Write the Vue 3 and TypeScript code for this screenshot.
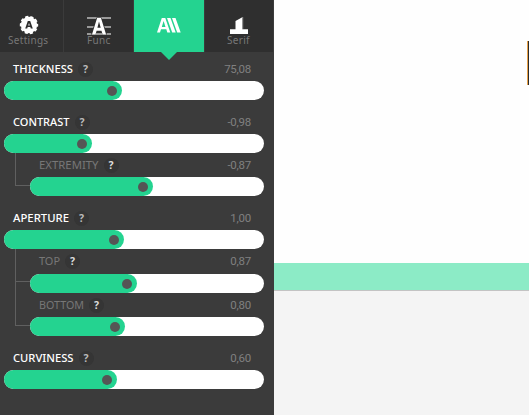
<script setup lang="ts">
interface Control {
  label: string
  value: string
  fill: number
  labelWidth: number
}
interface Group extends Control {
  children: Control[]
}

const groups: Group[] = [
  { label: 'THICKNESS', value: '75,08', fill: 118, labelWidth: 60, children: [] },
  {
    label: 'CONTRAST', value: '-0,98', fill: 88, labelWidth: 56.5,
    children: [{ label: 'EXTREMITY', value: '-0,87', fill: 123, labelWidth: 59.5 }],
  },
  {
    label: 'APERTURE', value: '1,00', fill: 120, labelWidth: 56,
    children: [
      { label: 'TOP', value: '0,87', fill: 107, labelWidth: 21 },
      { label: 'BOTTOM', value: '0,80', fill: 95, labelWidth: 45 },
    ],
  },
  { label: 'CURVINESS', value: '0,60', fill: 113, labelWidth: 60.5, children: [] },
]
</script>

<template>
  <div class="app">
    <aside class="sidebar">
      <nav class="tabs">
        <div class="tab settings">
          <svg class="icon" width="20" height="20" viewBox="0 0 20 20">
            <circle cx="10" cy="10" r="8.2" fill="#fff" />
            <circle cx="10" cy="10" r="8.3" fill="none" stroke="#fff" stroke-width="1.8" stroke-dasharray="3.2 2.01" stroke-dashoffset="1.5" />
            <path d="M6.2 13.500 8.800 6h2.400l2.600 7.500h-2l-.5-1.600H8.700l-.5 1.600zM9.200 10.600h1.600L10 8z" fill="#2f2f2f" fill-rule="evenodd" />
          </svg>
          <span>Settings</span>
        </div>
        <div class="tab func">
          <svg class="icon" width="24" height="20" viewBox="0 0 24 20">
            <path d="M0 2h24M0 11h24M0 18h24" stroke="#999" stroke-width="2" />
            <path d="M4 18.600 9.500 1.400h5L20 18.600h-4.600L14.200 15H9.800l-1.200 3.600z" fill="#2f2f2f" />
            <path d="M5 18.500 10.100 2h3.900l5.100 16.500h-3.500l-1.100-3.800H9.600l-1.100 3.800zM10.400 11.800h3.300L12 5.600z" fill="#fff" fill-rule="evenodd" />
          </svg>
          <span>Func</span>
        </div>
        <div class="tab active">
          <svg class="icon" width="24" height="16" viewBox="0 0 24 16">
            <path d="M0 15.500 4.800 1h3.500l5 14.500h-3l-1-3.200H4L3 15.500zM4.800 9.900h3.700L6.600 4z" fill="#fff" fill-rule="evenodd" />
            <path d="M10 1h3.500l5.200 14.500h-3.500zM15 1h3.500l5.200 14.500h-3.500z" fill="#fff" />
          </svg>
        </div>
        <div class="tab serif">
          <svg class="icon" width="18" height="18" viewBox="0 0 18 18">
            <path d="M0 12.200h5.500V4L12.300.3v11.900H18V17H0z" fill="#fff" />
            <path d="M12.700 0v12" stroke="#999" stroke-width="1" />
          </svg>
          <span>Serif</span>
        </div>
      </nav>
      <div class="controls">
        <section v-for="g in groups" :key="g.label" class="group">
          <div class="control">
            <div class="head">
              <svg class="label" :width="g.labelWidth" height="14"><text x="0" y="11" :textLength="g.labelWidth" lengthAdjust="spacingAndGlyphs">{{ g.label }}</text></svg>
              <span class="help">?</span>
              <span class="value">{{ g.value }}</span>
            </div>
            <div class="track"><div class="fill" :style="{ width: g.fill + 'px' }"><i class="knob"></i></div></div>
          </div>
          <div v-if="g.children.length" class="children">
            <div v-for="c in g.children" :key="c.label" class="control sub">
              <div class="head">
                <svg class="label" :width="c.labelWidth" height="14"><text x="0" y="11" :textLength="c.labelWidth" lengthAdjust="spacingAndGlyphs">{{ c.label }}</text></svg>
                <span class="help">?</span>
                <span class="value">{{ c.value }}</span>
              </div>
              <div class="track"><div class="fill" :style="{ width: c.fill + 'px' }"><i class="knob"></i></div></div>
            </div>
          </div>
        </section>
      </div>
    </aside>
    <main class="canvas">
      <div class="sheet"><div class="stem"></div></div>
      <div class="band"></div>
      <div class="floor"></div>
    </main>
  </div>
</template>

<style>
body { margin: 0; overflow: hidden; }
</style>

<style scoped>
.app {
  display: flex;
  width: 529px;
  height: 415px;
  overflow: hidden;
  font-family: "Noto Sans", "Open Sans", sans-serif;
}
.sidebar {
  width: 274px;
  flex: none;
  background: #3b3b3b;
}
.tabs {
  display: grid;
  grid-template-columns: 63px 69px 70px 68px;
  column-gap: 1px;
  height: 52px;
}
.tab {
  position: relative;
  display: flex;
  flex-direction: column;
  align-items: center;
  background: #2f2f2f;
  color: #777;
  font-size: 10px;
  line-height: 12px;
  letter-spacing: 0.3px;
}
.icon { display: block; flex: none; }
.tab span { position: absolute; top: 34px; white-space: nowrap; }
.settings { align-items: flex-start; }
.settings .icon { margin: 15px 0 0 19px; }
.settings span { left: 8px; }
.func .icon { margin-top: 16px; }
.func span { left: 23px; }
.active { background: #24d390; }
.active .icon { margin-top: 17px; }
.active::after {
  content: "";
  position: absolute;
  top: 52px;
  left: 27px;
  border: 8px solid transparent;
  border-top-color: #24d390;
  border-bottom: 0;
}
.serif .icon { margin-top: 17px; }
.serif span { left: 22px; }
.controls { padding: 5px 10px 0 4px; }
.group { margin-bottom: 10px; }
.head {
  display: flex;
  align-items: center;
  height: 24px;
  padding: 0 13px 0 9px;
}
.label { flex: none; overflow: visible; }
.label text {
  fill: #fff;
  font-size: 10.7px;
  font-weight: 500;
}
.sub .label text { fill: #777; font-weight: 400; }
.help {
  width: 15px;
  height: 15px;
  margin-left: 5px;
  border-radius: 50%;
  background: #353535;
  color: #bbb;
  font-size: 10.5px;
  font-weight: 700;
  line-height: 15px;
  text-align: center;
}
.sub .help { color: #ddd; }
.value {
  margin-left: auto;
  color: #808080;
  font-family: Roboto, sans-serif;
  font-size: 11.5px;
  line-height: 14px;
  letter-spacing: -0.25px;
}
.track {
  height: 19px;
  border-radius: 10px;
  background: #fff;
}
.fill {
  display: flex;
  align-items: center;
  justify-content: flex-end;
  box-sizing: border-box;
  height: 19px;
  padding-right: 5px;
  border-radius: 10px;
  background: #24d390;
}
.knob {
  width: 10px;
  height: 10px;
  border-radius: 50%;
  background: #555;
}
.children {
  display: flex;
  flex-direction: column;
  margin-left: 11px;
}
.sub {
  position: relative;
  padding-left: 15px;
}
.sub:not(:last-child) .head { margin-bottom: 1px; }
.group:nth-child(2) .sub .head { margin-bottom: 0; }
.sub::before {
  content: "";
  position: absolute;
  top: 0;
  left: 0;
  width: 14px;
  height: 32px;
  border-left: 1px solid #606060;
  border-bottom: 1px solid #606060;
}
.sub:not(:last-child)::after {
  content: "";
  position: absolute;
  top: 32px;
  bottom: 0;
  left: 0;
  width: 1px;
  background: #606060;
}
.canvas {
  display: flex;
  flex: 1;
  flex-direction: column;
}
.sheet {
  display: flex;
  align-items: flex-start;
  justify-content: flex-end;
  height: 263px;
  background: #fefefe;
}
.stem {
  width: 1px;
  height: 44px;
  margin-top: 41px;
  border-left: 1px solid #e8a24a;
  background: #2b2b2b;
}
.band {
  height: 27px;
  background: #8cebc6;
  border-bottom: 1px solid #c3c3c3;
}
.floor { flex: 1; background: #f4f4f4; }
</style>
